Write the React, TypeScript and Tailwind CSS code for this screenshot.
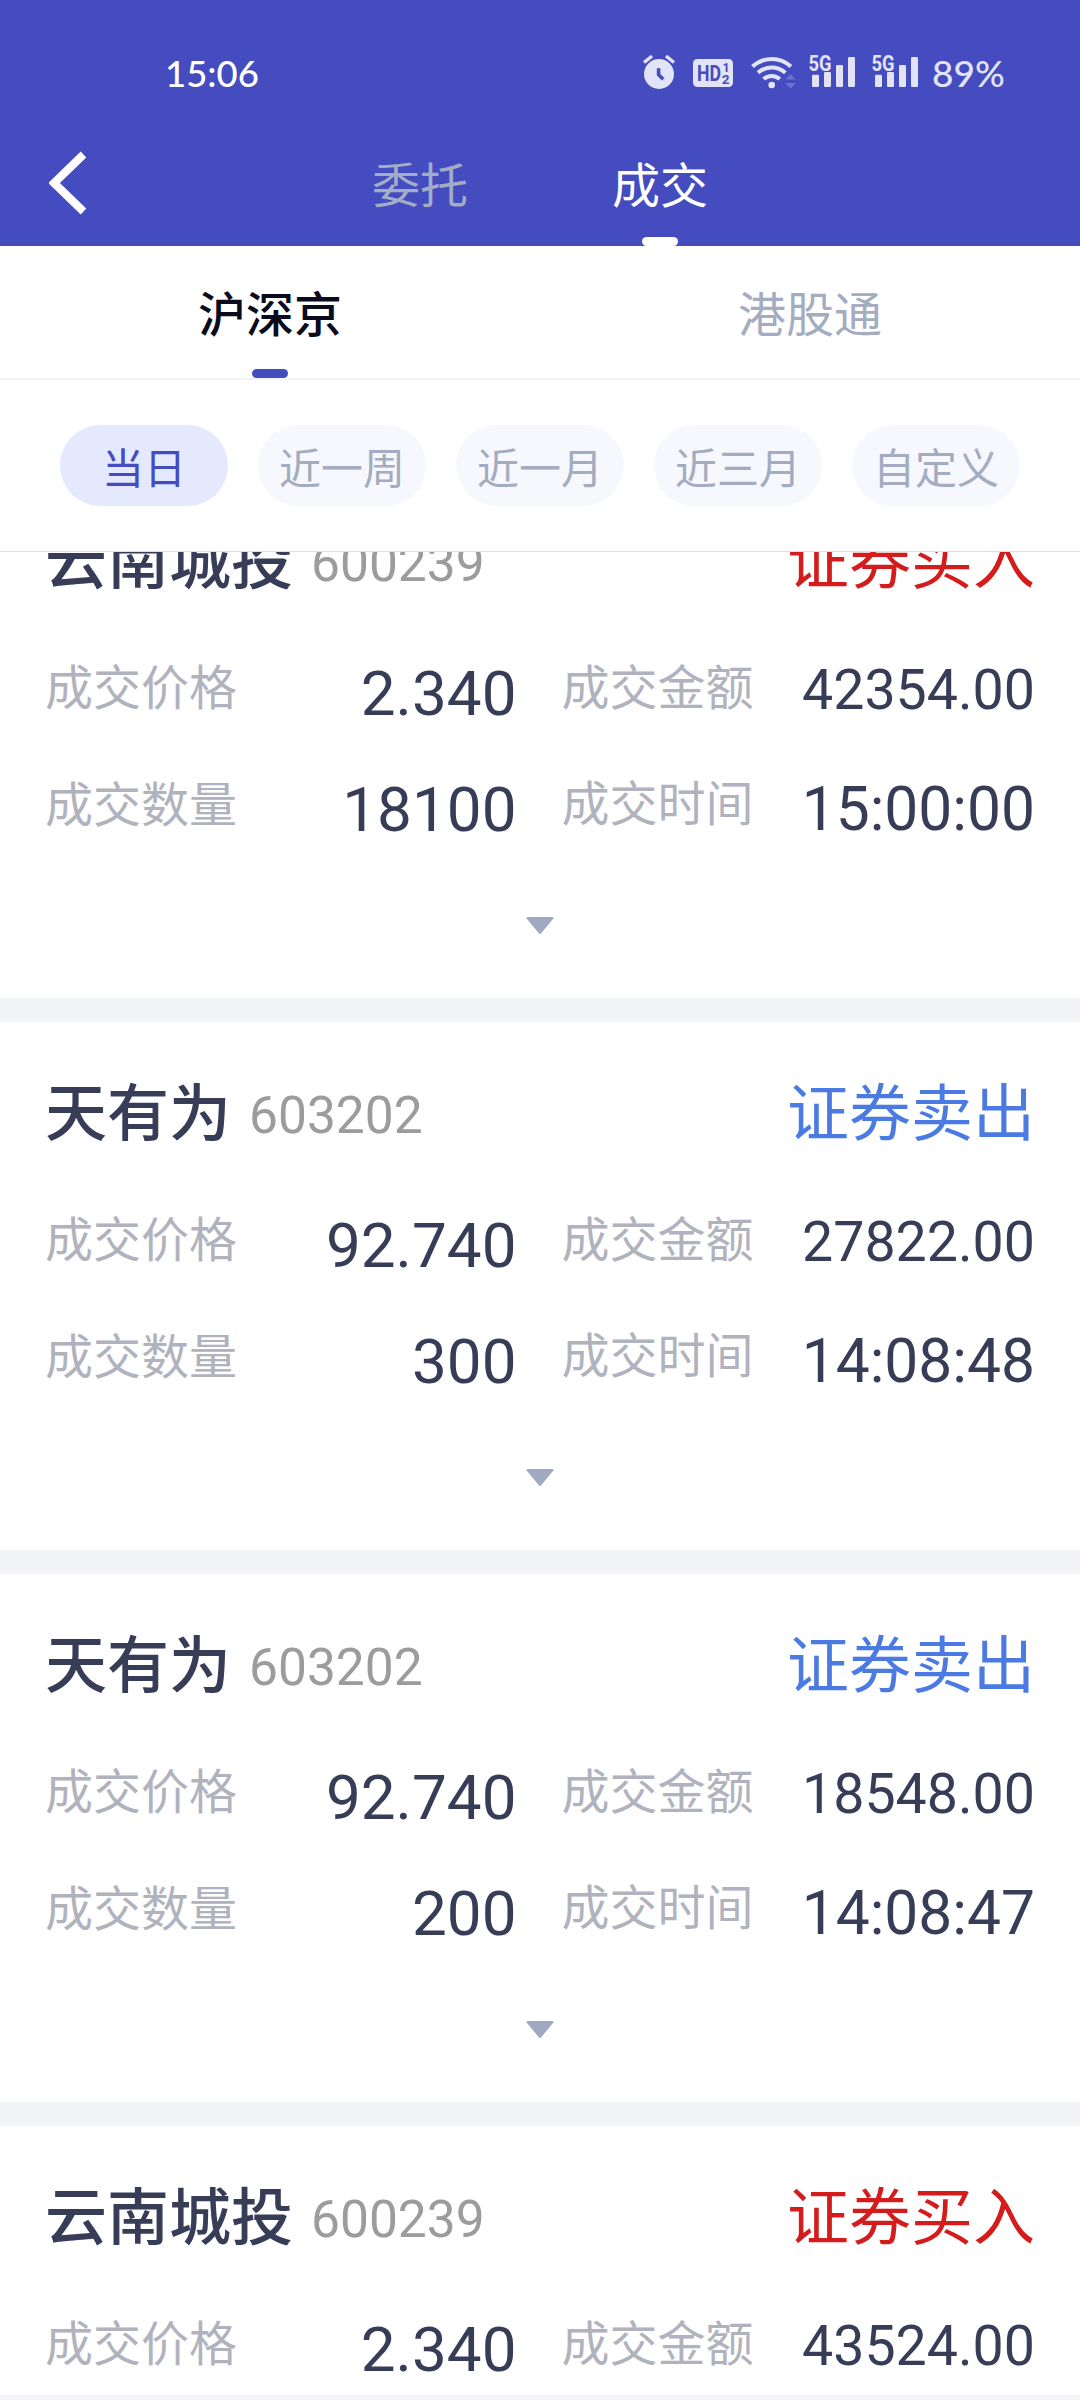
type Trade = {
  name: string;
  code: string;
  side: "buy" | "sell";
  price: string;
  amount: string;
  quantity: string;
  time: string;
};

const trades: Trade[] = [
  { name: "云南城投", code: "600239", side: "buy", price: "2.340", amount: "42354.00", quantity: "18100", time: "15:00:00" },
  { name: "天有为", code: "603202", side: "sell", price: "92.740", amount: "27822.00", quantity: "300", time: "14:08:48" },
  { name: "天有为", code: "603202", side: "sell", price: "92.740", amount: "18548.00", quantity: "200", time: "14:08:47" },
  { name: "云南城投", code: "600239", side: "buy", price: "2.340", amount: "43524.00", quantity: "", time: "" },
];

const ranges = ["当日", "近一周", "近一月", "近三月", "自定义"];

function AlarmIcon() {
  return (
    <svg className="h-[36px] w-[34px]" viewBox="0 0 34 36">
      <circle cx="17" cy="20" r="15" fill="#e3e3f8" />
      <path d="M2 8.5 10 2M32 8.5 24 2" stroke="#e3e3f8" strokeWidth="3.4" fill="none" />
      <path d="M16.6 14.200v6.600l4.600 4.400" stroke="#444cbf" strokeWidth="3.600" fill="none" />
    </svg>
  );
}

function HdIcon() {
  return (
    <svg className="block h-[28px] w-[40px]" viewBox="0 0 40 28">
      <rect width="40" height="28" rx="4.5" fill="#e3e3f8" />
      <g fill="#444cbf" fontFamily="Roboto, sans-serif" fontWeight="700">
        <text x="4" y="22" fontSize="22" textLength="24" lengthAdjust="spacingAndGlyphs">HD</text>
        <text x="29.500" y="13" fontSize="12.500">1</text>
        <text x="28.800" y="25" fontSize="13.500">2</text>
      </g>
    </svg>
  );
}

function WifiIcon() {
  return (
    <svg className="block h-[36px] w-[46px]" viewBox="0 0 46 36">
      <g fill="none" stroke="#e3e3f8" strokeWidth="4">
        <path d="M1.500 12.500a28.500 28.500 0 0 1 38.400 0" />
        <path d="M7 18.800a20.500 20.500 0 0 1 27.400 0" />
        <path d="M12.600 25a12.300 12.300 0 0 1 16.200 0" />
      </g>
      <circle cx="20.700" cy="31" r="3.300" fill="#e3e3f8" />
      <path d="M34.500 25.500 39.500 20l5.500 5.500zM34.500 29h10.500l-5.300 5.800z" fill="#6b70d0" />
    </svg>
  );
}

function SignalIcon() {
  return (
    <svg className="block h-[36px] w-[48px] overflow-visible" viewBox="0 0 48 36">
      <text x="0.500" y="16.500" fontSize="21.500" fontWeight="700" fontFamily="Roboto, sans-serif" fill="#e3e3f8" textLength="23" lengthAdjust="spacingAndGlyphs">5G</text>
      <g fill="#e3e3f8">
        <rect x="4" y="20.700" width="7" height="12.300" rx="1.200" />
        <rect x="16" y="18" width="7" height="15" rx="1.200" />
        <rect x="28" y="11" width="7" height="22" rx="1.200" />
        <rect x="40" y="3" width="7" height="30" rx="1.200" />
      </g>
    </svg>
  );
}

function StatusBar() {
  return (
    <div className="flex h-[120px] items-start justify-between pt-[54px] pl-[165px]">
      <span className="-mt-px font-['Lato'] text-[36.5px] leading-[40px] font-medium text-white">15:06</span>
      <div className="flex h-[36px] w-[438px] items-center">
        <AlarmIcon />
        <span className="ml-[17px] pt-px"><HdIcon /></span>
        <span className="ml-[18px]"><WifiIcon /></span>
        <span className="ml-[11px]"><SignalIcon /></span>
        <span className="ml-[15px]"><SignalIcon /></span>
        <span className="ml-[13px] pt-[2px] font-['Lato'] text-[37px] leading-[40px] font-medium text-[#e3e3f8]">89%</span>
      </div>
    </div>
  );
}

function Header() {
  return (
    <header className="h-[246px] shrink-0 bg-[#444cbf] text-white">
      <StatusBar />
      <div className="flex h-[126px]">
        <svg className="mt-[31px] ml-[49px] h-[64px] w-[38px]" viewBox="0 0 38 64">
          <path d="M34.500 3.500 5 32l29.500 28.500" fill="none" stroke="#fff" strokeWidth="8" />
        </svg>
        <nav className="ml-[213px] flex h-full w-[480px] text-[48px]">
          <div className="flex w-[240px] justify-center">
            <span className="pt-[27px] leading-[70px] text-[#a3acc6]">委托</span>
          </div>
          <div className="flex w-[240px] flex-col items-center justify-between">
            <span className="pt-[27px] leading-[70px]">成交</span>
            <span className="h-[9px] w-[36px] rounded-full bg-white" />
          </div>
        </nav>
      </div>
    </header>
  );
}

function MarketTabs() {
  return (
    <div className="flex h-[134px] shrink-0 border-b-2 border-[#f3f4f6] text-[48px]">
      <div className="flex w-1/2 flex-col items-center justify-between">
        <span className="pt-[30px] leading-[70px] font-medium text-[#0a0c1e]">沪深京</span>
        <span className="h-[9px] w-[36px] rounded-full bg-[#444cbf]" />
      </div>
      <div className="flex w-1/2 justify-center">
        <span className="pt-[30px] leading-[70px] text-[#a3acc0]">港股通</span>
      </div>
    </div>
  );
}

function RangeFilter() {
  return (
    <div className="flex h-[172px] shrink-0 gap-[30px] border-b border-[#dcdde0] px-[60px] pt-[45px] text-[42px]">
      {ranges.map((r, i) => (
        <button
          key={r}
          className={
            i === 0
              ? "h-[81px] w-[168px] rounded-full bg-[#e5e9fe] leading-[80px] text-[#444cbf]"
              : "h-[81px] w-[168px] rounded-full bg-[#f6f8fd] leading-[80px] text-[#a3acc0]"
          }
        >
          {r}
        </button>
      ))}
    </div>
  );
}

function TradeCard({ trade }: { trade: Trade }) {
  return (
    <article className="h-[552px] shrink-0 border-b-[24px] border-[#f3f4f7] bg-white pt-[45px] text-[#373d57]">
      <div className="flex h-[90px] justify-between pr-[45px] pl-[45px]">
        <div className="flex">
          <h2 className="text-[62px] leading-[84px] font-medium">{trade.name}</h2>
          <span className="ml-[18px] font-['Roboto'] text-[51.5px] leading-[97px] text-[#9c9c9c]">{trade.code}</span>
        </div>
        <span className={trade.side === "buy" ? "text-[62px] leading-[84px] text-[#d41c1c]" : "text-[62px] leading-[84px] text-[#4a7ae2]"}>
          {trade.side === "buy" ? "证券买入" : "证券卖出"}
        </span>
      </div>
      <div className="mt-[24px] flex gap-[45px] px-[45px]">
        <dl className="grid w-[472px] grid-cols-[auto_1fr] text-[48px]">
          <dt className="h-[116px] leading-[111px] text-[#b0b3be]">成交价格</dt>
          <dd className="h-[116px] text-right font-['Roboto'] text-[62px] leading-[130px]">{trade.price}</dd>
          <dt className="h-[116px] leading-[112px] text-[#b0b3be]">成交数量</dt>
          <dd className="h-[116px] text-right font-['Roboto'] text-[62px] leading-[130px]">{trade.quantity}</dd>
        </dl>
        <dl className="grid w-[474px] grid-cols-[auto_1fr] text-[48px]">
          <dt className="h-[116px] leading-[110px] text-[#b0b3be]">成交金额</dt>
          <dd className="h-[116px] text-right font-['Roboto'] text-[55.5px] leading-[124px]">{trade.amount}</dd>
          <dt className="h-[116px] leading-[110px] text-[#b0b3be]">成交时间</dt>
          <dd className="h-[116px] text-right font-['Roboto'] text-[60.5px] leading-[130px]">{trade.time}</dd>
        </dl>
      </div>
      <svg className="mx-auto mt-[56px] h-[18px] w-[28px]" viewBox="0 0 28 18">
        <path d="M1.500 0h25c1 0 1.300 1 .7 1.800L15 16.500c-.6.700-1.400.700-2 0L.8 1.800C.2 1 .5 0 1.500 0z" fill="#a0a9bf" />
      </svg>
    </article>
  );
}

export default function App() {
  return (
    <div className="flex h-[2400px] w-[1080px] flex-col overflow-hidden bg-white font-['Noto_Sans_CJK_SC',sans-serif]">
      <Header />
      <MarketTabs />
      <RangeFilter />
      <main className="flex h-[1843px] shrink-0 flex-col overflow-hidden">
        <div className="-mt-[82px] flex flex-col">
          {trades.map((t, i) => (
            <TradeCard key={i} trade={t} />
          ))}
        </div>
      </main>
      <footer className="h-[5px] shrink-0 bg-[#f3f4f7]" />
    </div>
  );
}
